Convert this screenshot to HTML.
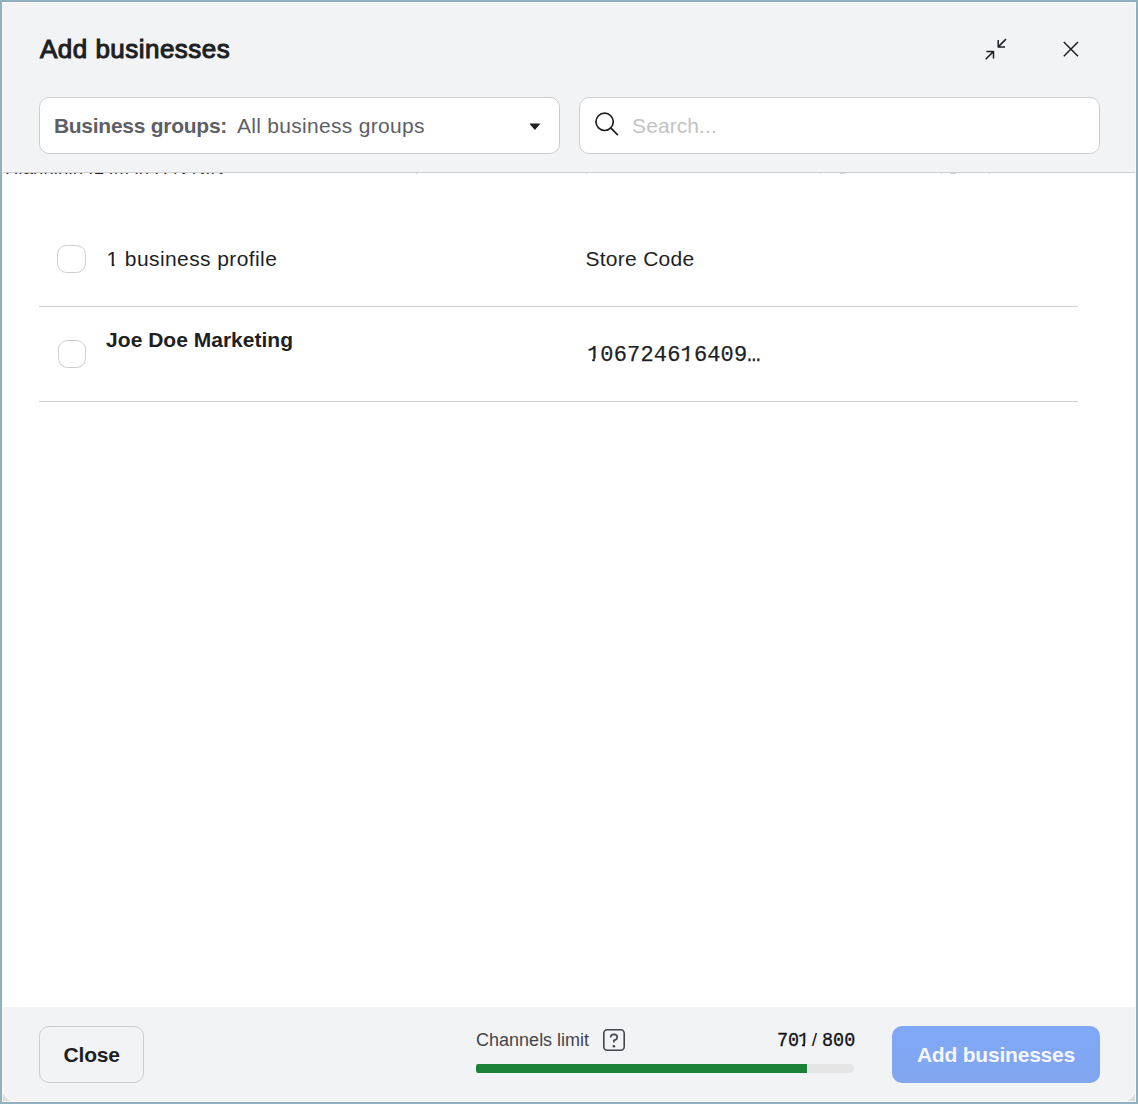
<!DOCTYPE html>
<html>
<head>
<meta charset="utf-8">
<style>
*{box-sizing:border-box;margin:0;padding:0}
html,body{width:1138px;height:1104px;overflow:hidden;background:#95b2c1;font-family:"Liberation Sans",sans-serif;}
#b2{position:absolute;left:1px;top:1px;width:1136px;height:1102px;background:#8eadbc;}
#frame{position:absolute;left:2px;top:2px;width:1134px;height:1100px;background:#dcdbdc;}
#frame:after{content:'';box-sizing:border-box;position:absolute;left:0;top:0;width:1134px;height:1100px;border:1px solid #f9f8fa;pointer-events:none;}
#modal{position:absolute;left:0;top:0;width:1134px;height:1100px;background:#fff;overflow:hidden;border-radius:0 0 15px 15px;}
#modal:after{content:'';box-sizing:border-box;position:absolute;left:0;top:0;width:1134px;height:1100px;border:1.2px solid #faf9fb;border-radius:0 0 15px 15px;pointer-events:none;z-index:5}
#head{position:absolute;left:0;top:0;width:1134px;height:171px;background:#f2f3f5;border-bottom:1px solid #cfd0d2;}
.field{position:absolute;top:95px;height:57px;width:521px;background:#fff;border:1px solid #cdcdcf;border-radius:10px;}
#dd{left:37px;}
#search{left:577px;}
#dd .caret{position:absolute;left:490px;top:25px;width:0;height:0;border-left:6px solid transparent;border-right:6px solid transparent;border-top:7px solid #1e1f24;}
#clip{position:absolute;left:3px;top:171px;height:1px;width:300px;overflow:hidden;}
#clip span{position:absolute;left:0;top:-15.5px;font-size:18.5px;line-height:20px;color:#1e1f24;white-space:nowrap;letter-spacing:0.1px;}
.cb{position:absolute;width:29px;height:28px;border:1px solid #cecece;border-radius:9.5px;background:#fff;}
.hl{position:absolute;left:37px;width:1039px;height:1px;background:#cfcfd0;}
.t{position:absolute;white-space:nowrap;color:#1e1f24;}
#foot{position:absolute;left:0;top:1005px;width:1134px;height:95px;background:#f2f3f5;}
.btn{position:absolute;top:19px;height:57px;border-radius:10px;}
#closeb{left:37px;width:105px;border:1px solid #cdcdcf;background:#f2f3f5;}
#addb{left:890px;width:208px;background:linear-gradient(#7fa8f7,#82a6ef);}
</style>
</head>
<body>
<div id="b2"></div>
<div id="frame">
<div id="modal">
  <div id="head">
    <svg style="position:absolute;left:0;top:0" width="1134" height="100" viewBox="2 2 1134 100" fill="none" stroke="#1e1f24" stroke-width="1.5">
      <path d="M1006 39.1 L998.2 46.9 M998.2 40 V46.9 H1005" stroke-linejoin="round"/>
      <path d="M985.7 59.2 L993.5 51.4 M986.4 51.4 H993.5 V58.5" stroke-linejoin="round"/>
      <path d="M1063.8 42 L1078 56.2 M1078 42 L1063.8 56.2"/>
    </svg>
    <div class="field" id="dd"><svg style="position:absolute;left:485px;top:20px" width="20" height="16" viewBox="485 20 20 16"><path d="M490.3 26 H499.4 L494.85 31.2 Z" fill="#1e1f24" stroke="#1e1f24" stroke-width="1.1" stroke-linejoin="round"/></svg></div>
    <div class="field" id="search">
      <svg style="position:absolute;left:13px;top:12px" width="28" height="28" viewBox="0 0 28 28" fill="none" stroke="#1e1f24" stroke-width="1.7"><circle cx="11.6" cy="11.85" r="8.65"/><path d="M17.7 17.95 L24.9 25.15"/></svg>
    </div>
  </div>
  <div id="clip"><span>Hlanninin IL IM lh H N NIN</span></div>

  <div style="position:absolute;left:414px;top:171px;width:1px;height:1px;background:#d4d4d6"></div><div style="position:absolute;left:584px;top:171px;width:1px;height:1px;background:#d4d4d6"></div><div style="position:absolute;left:818px;top:171px;width:1px;height:1px;background:#d4d4d6"></div><div style="position:absolute;left:838px;top:171px;width:5px;height:1px;background:#d4d4d6"></div><div style="position:absolute;left:939px;top:171px;width:1px;height:1px;background:#d4d4d6"></div><div style="position:absolute;left:948px;top:171px;width:6px;height:1px;background:#d4d4d6"></div><div style="position:absolute;left:987px;top:171px;width:1px;height:1px;background:#d4d4d6"></div>
  <div class="cb" style="left:55px;top:243px"></div>
  <div class="hl" style="top:304px"></div>
  <div class="cb" style="left:56px;top:338px;width:28px;height:28px"></div>
  <div class="hl" style="top:399px"></div>

  <div id="foot">
    <div class="btn" id="closeb"></div>
    <svg style="position:absolute;left:600px;top:21px" width="24" height="24" viewBox="0 0 24 24" fill="none" stroke="#44454b" stroke-width="1.6"><rect x="1.8" y="1.8" width="20.4" height="20.4" rx="3.5"/><path d="M8.6 9.5 C8.6 7.5 10 6.4 11.9 6.4 C13.9 6.4 15.2 7.6 15.2 9.2 C15.2 11.1 13.7 12 11.9 12.3 V14.5" stroke-linecap="butt" stroke-linejoin="round"/><circle cx="11.9" cy="18.3" r="1.3" fill="#44454b" stroke="none"/></svg>
    <div style="position:absolute;left:474px;top:57px;width:378px;height:9px;border-radius:2.5px 5px 5px 2.5px;background:#e5e5e6;overflow:hidden"><div style="width:331px;height:9px;background:#1a8137"></div></div>
    <div class="btn" id="addb"></div>
  </div>
  <div class="t" id="title" style="left:38.04px;top:29.61px;font-size:26px;line-height:34px;letter-spacing:0.469px;font-family:'Liberation Sans',sans-serif;color:#1e1f24;-webkit-text-stroke:1.05px #1e1f24;">Add businesses</div>
  <div class="t" id="lbl" style="left:51.90px;top:110.36px;font-size:21px;line-height:27px;letter-spacing:-0.260px;font-family:'Liberation Sans',sans-serif;color:#5e5f66;font-weight:bold;">Business groups:</div>
  <div class="t" id="val" style="left:234.90px;top:110.36px;font-size:21px;line-height:27px;letter-spacing:0.310px;font-family:'Liberation Sans',sans-serif;color:#5e5f66;">All business groups</div>
  <div class="t" id="ph" style="left:630.08px;top:110.36px;font-size:21px;line-height:27px;letter-spacing:0.075px;font-family:'Liberation Sans',sans-serif;color:#c2c3c6;">Search...</div>
  <div class="t" id="h1" style="left:104.54px;top:243.16px;font-size:21px;line-height:27px;letter-spacing:0.404px;font-family:'Liberation Sans',sans-serif;color:#1e1f24;"><span style="display:inline-block;clip-path:polygon(0 0,12.5px 0,12.5px 18.7px,7.9px 18.7px,7.9px 27px,5.1px 27px,5.1px 18.7px,0 18.7px)">1</span> business profile</div>
  <div class="t" id="h2" style="left:583.48px;top:243.16px;font-size:21px;line-height:27px;letter-spacing:0.280px;font-family:'Liberation Sans',sans-serif;color:#1e1f24;">Store Code</div>
  <div class="t" id="name" style="left:104.12px;top:324.46px;font-size:21px;line-height:27px;letter-spacing:0.010px;font-family:'Liberation Sans',sans-serif;color:#1e1f24;font-weight:bold;">Joe Doe Marketing</div>
  <div class="t" id="code" style="left:584.90px;top:338.53px;font-size:22px;line-height:29px;letter-spacing:0.170px;font-family:'Liberation Mono',monospace;color:#1e1f24;-webkit-text-stroke:0.25px #1e1f24;"><span style="display:inline-block;clip-path:polygon(0 0,14px 0,14px 17.9px,7.9px 17.9px,7.9px 29px,5.3px 29px,5.3px 17.9px,0 17.9px)">1</span>067246<span style="display:inline-block;clip-path:polygon(0 0,14px 0,14px 17.9px,8.2px 17.9px,8.2px 29px,5px 29px,5px 17.9px,0 17.9px)">1</span>6409…</div>
  <div class="t" id="chan" style="left:474.12px;top:1026.65px;font-size:18px;line-height:23px;letter-spacing:-0.006px;font-family:'Liberation Sans',sans-serif;color:#44454b;">Channels limit</div>
  <div class="t" id="c1" style="left:774.80px;top:1025.13px;font-size:20.5px;line-height:27px;letter-spacing:0.000px;font-family:'Liberation Mono',monospace;color:#111216;transform:scaleX(0.9);transform-origin:0 0;-webkit-text-stroke:0.3px #111216;">70</div>
  <div class="t" id="c1b" style="left:795.90px;top:1025.13px;font-size:20.5px;line-height:27px;letter-spacing:0.000px;font-family:'Liberation Mono',monospace;color:#111216;transform:scaleX(0.9);transform-origin:0 0;-webkit-text-stroke:0.3px #111216;clip-path:polygon(0 0,12.3px 0,12.3px 16.4px,7.8px 16.4px,7.8px 27px,4.5px 27px,4.5px 16.4px,0 16.4px);">1</div>
  <div class="t" id="c2" style="left:809.80px;top:1025.32px;font-size:19px;line-height:25px;letter-spacing:0.000px;font-family:'Liberation Sans',sans-serif;color:#111216;">/</div>
  <div class="t" id="c3" style="left:820.20px;top:1025.13px;font-size:20.5px;line-height:27px;letter-spacing:0.000px;font-family:'Liberation Mono',monospace;color:#111216;transform:scaleX(0.9);transform-origin:0 0;-webkit-text-stroke:0.3px #111216;">800</div>
  <div class="t" id="close" style="left:61.54px;top:1039.16px;font-size:21px;line-height:27px;letter-spacing:-0.174px;font-family:'Liberation Sans',sans-serif;color:#1e1f24;font-weight:bold;">Close</div>
  <div class="t" id="add" style="left:914.90px;top:1039.16px;font-size:21px;line-height:27px;letter-spacing:-0.208px;font-family:'Liberation Sans',sans-serif;color:#f5f6fb;font-weight:bold;">Add businesses</div>
</div>
</div>
</body>
</html>
